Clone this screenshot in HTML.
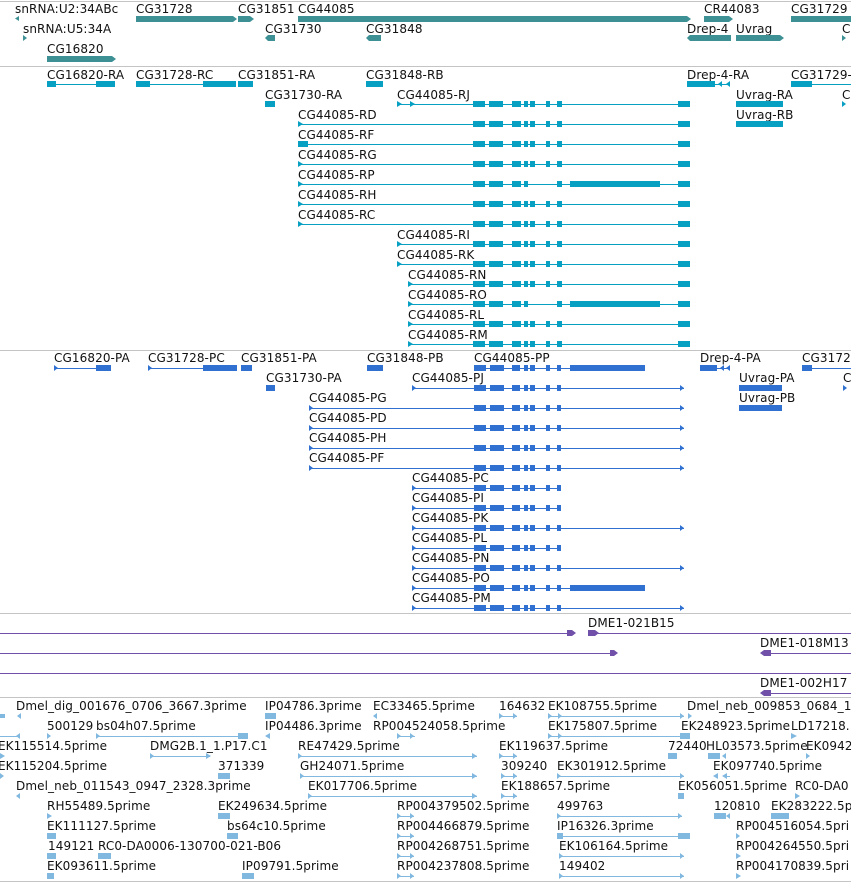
<!DOCTYPE html>
<html><head><meta charset="utf-8"><style>
html,body{margin:0;padding:0;background:#fff;}
svg{display:block;}
rect,line{shape-rendering:crispEdges;}
text{font-family:"DejaVu Sans","Liberation Sans",sans-serif;font-size:12px;fill:#111;letter-spacing:0.1px;}
</style></head><body>
<svg width="851" height="882" viewBox="0 0 851 882" xmlns="http://www.w3.org/2000/svg">
<defs>
<g id="e1"><rect x="473" y="-3" width="12" height="6"/><rect x="489" y="-3" width="14" height="6"/><rect x="512" y="-3" width="9" height="6"/><rect x="524" y="-3" width="4" height="6"/><rect x="530" y="-3" width="5" height="6"/><rect x="546" y="-3" width="4" height="6"/><rect x="557" y="-3" width="5" height="6"/><rect x="678" y="-3" width="12" height="6"/></g>
<g id="e2"><rect x="473" y="-3" width="12" height="6"/><rect x="489" y="-3" width="14" height="6"/><rect x="512" y="-3" width="9" height="6"/><rect x="524" y="-3" width="4" height="6"/><rect x="557" y="-3" width="5" height="6"/><rect x="570" y="-3" width="90" height="6"/><rect x="678" y="-3" width="12" height="6"/></g>
<g id="p0"><rect x="474" y="-3" width="12" height="6"/><rect x="490" y="-3" width="14" height="6"/><rect x="512" y="-3" width="8" height="6"/><rect x="524" y="-3" width="4" height="6"/><rect x="530" y="-3" width="5" height="6"/><rect x="546" y="-3" width="4" height="6"/><rect x="557" y="-3" width="4" height="6"/></g>
</defs>
<g stroke="#c4c4c4" stroke-width="1"><line x1="0" y1="1.5" x2="851" y2="1.5"/><line x1="0" y1="66.5" x2="851" y2="66.5"/><line x1="0" y1="350.5" x2="851" y2="350.5"/><line x1="0" y1="613.5" x2="851" y2="613.5"/><line x1="0" y1="697.5" x2="851" y2="697.5"/><line x1="0" y1="881.5" x2="851" y2="881.5"/></g>

<!-- genes -->
<text x="15" y="13">snRNA:U2:34ABc</text><text x="136" y="13">CG31728</text><text x="238" y="13">CG31851</text><text x="298" y="13">CG44085</text><text x="704" y="13">CR44083</text><text x="791" y="13">CG31729</text>
<text x="23" y="33">snRNA:U5:34A</text><text x="265" y="33">CG31730</text><text x="366" y="33">CG31848</text><text x="687" y="33">Drep-4</text><text x="736" y="33">Uvrag</text><text x="842" y="33">C</text>
<text x="47" y="53">CG16820</text>
<g fill="#3d9094">
<polygon points="15,18.5 19,16 19,21"/><rect x="136" y="16" width="97" height="6"/><polygon points="233,16 237,19 233,22"/><rect x="238" y="16" width="12" height="6"/><polygon points="250,16 254,19 250,22"/><rect x="298" y="16" width="389" height="6"/><polygon points="687,16 691,19 687,22"/><rect x="704" y="16" width="25" height="6"/><polygon points="729,16 733,19 729,22"/><rect x="791" y="16" width="60" height="6"/>
<polygon points="23,35 27,38 23,41"/><polygon points="265,38 268,35 268,41"/><rect x="268" y="35" width="7" height="6"/><polygon points="366,38 369,35 369,41"/><rect x="369" y="35" width="12" height="6"/><polygon points="687,38 690,35 690,41"/><rect x="690" y="35" width="41" height="6"/><rect x="736" y="35" width="44" height="6"/><polygon points="780,35 784,38 780,41"/><polygon points="842,35 846,38 842,41"/>
<rect x="47" y="56" width="65" height="6"/><polygon points="112,56 116,59 112,62"/>
</g>

<!-- transcripts -->
<text x="47" y="79">CG16820-RA</text><text x="136" y="79">CG31728-RC</text><text x="238" y="79">CG31851-RA</text><text x="366" y="79">CG31848-RB</text><text x="687" y="79">Drep-4-RA</text><text x="791" y="79">CG31729-</text>
<text x="265" y="99">CG31730-RA</text><text x="397" y="99">CG44085-RJ</text><text x="736" y="99">Uvrag-RA</text><text x="842" y="99">C</text>
<text x="298" y="119">CG44085-RD</text><text x="736" y="119">Uvrag-RB</text>
<text x="298" y="139">CG44085-RF</text><text x="298" y="159">CG44085-RG</text><text x="298" y="179">CG44085-RP</text><text x="298" y="199">CG44085-RH</text><text x="298" y="219">CG44085-RC</text>
<text x="397" y="239">CG44085-RI</text><text x="397" y="259">CG44085-RK</text><text x="408" y="279">CG44085-RN</text><text x="408" y="299">CG44085-RO</text><text x="408" y="319">CG44085-RL</text><text x="408" y="339">CG44085-RM</text>
<g fill="#08a0c2">
<rect x="47" y="84" width="68" height="1"/><rect x="47" y="81" width="9" height="6"/><rect x="96" y="81" width="19" height="6"/>
<rect x="136" y="84" width="100" height="1"/><rect x="136" y="81" width="14" height="6"/><rect x="203" y="81" width="33" height="6"/>
<rect x="238" y="81" width="15" height="6"/><rect x="366" y="81" width="17" height="6"/>
<rect x="687" y="81" width="28" height="6"/><rect x="715" y="84" width="15" height="1"/><polygon points="718,84 722,81 722,87"/><polygon points="726,84 730,81 730,87"/>
<rect x="791" y="81" width="21" height="6"/><rect x="812" y="84" width="39" height="1"/>
<rect x="265" y="101" width="10" height="6"/><rect x="736" y="101" width="47" height="6"/><rect x="736" y="121" width="47" height="6"/><polygon points="842,101 846,104 842,107"/>
<rect x="397" y="104" width="293" height="1"/><polygon points="397,101 402,104 397,107"/><polygon points="410,101 415,104 410,107"/>
<use href="#e1" y="104"/>
<rect x="298" y="124" width="392" height="1"/><polygon points="298,121 303,124 298,127"/><use href="#e1" y="124"/>
<rect x="298" y="144" width="392" height="1"/><rect x="298" y="141" width="10" height="6"/><use href="#e1" y="144"/>
<rect x="298" y="164" width="392" height="1"/><polygon points="298,161 303,164 298,167"/><use href="#e1" y="164"/>
<rect x="298" y="184" width="392" height="1"/><polygon points="298,181 303,184 298,187"/><use href="#e2" y="184"/>
<rect x="298" y="204" width="392" height="1"/><polygon points="298,201 303,204 298,207"/><use href="#e1" y="204"/>
<rect x="298" y="224" width="392" height="1"/><polygon points="298,221 303,224 298,227"/><use href="#e1" y="224"/>
<rect x="397" y="244" width="293" height="1"/><polygon points="397,241 402,244 397,247"/><use href="#e1" y="244"/>
<rect x="397" y="264" width="293" height="1"/><polygon points="397,261 402,264 397,267"/><use href="#e1" y="264"/>
<rect x="408" y="284" width="282" height="1"/><polygon points="408,281 413,284 408,287"/><use href="#e1" y="284"/>
<rect x="408" y="304" width="282" height="1"/><polygon points="408,301 413,304 408,307"/><use href="#e2" y="304"/>
<rect x="408" y="324" width="282" height="1"/><polygon points="408,321 413,324 408,327"/><use href="#e1" y="324"/>
<rect x="408" y="344" width="282" height="1"/><polygon points="408,341 413,344 408,347"/><use href="#e1" y="344"/>
</g>

<!-- peptides -->
<text x="54" y="362">CG16820-PA</text><text x="148" y="362">CG31728-PC</text><text x="241" y="362">CG31851-PA</text><text x="367" y="362">CG31848-PB</text><text x="474" y="362">CG44085-PP</text><text x="700" y="362">Drep-4-PA</text><text x="802" y="362">CG3172</text>
<text x="266" y="382">CG31730-PA</text><text x="412" y="382">CG44085-PJ</text><text x="739" y="382">Uvrag-PA</text><text x="843" y="382">C</text>
<text x="309" y="402">CG44085-PG</text><text x="739" y="402">Uvrag-PB</text>
<text x="309" y="422">CG44085-PD</text><text x="309" y="442">CG44085-PH</text><text x="309" y="462">CG44085-PF</text>
<text x="412" y="482">CG44085-PC</text><text x="412" y="502">CG44085-PI</text><text x="412" y="522">CG44085-PK</text><text x="412" y="542">CG44085-PL</text><text x="412" y="562">CG44085-PN</text><text x="412" y="582">CG44085-PO</text><text x="412" y="602">CG44085-PM</text>
<g fill="#3070d0">
<rect x="54" y="368" width="57" height="1"/><polygon points="54,365 58,368 54,371"/><rect x="96" y="365" width="15" height="6"/>
<rect x="148" y="368" width="89" height="1"/><polygon points="148,365 152,368 148,371"/><rect x="203" y="365" width="34" height="6"/>
<rect x="241" y="365" width="11" height="6"/><rect x="367" y="365" width="16" height="6"/>
<rect x="474" y="368" width="171" height="1"/><use href="#p0" y="368"/><rect x="570" y="365" width="75" height="6"/>
<rect x="700" y="365" width="17" height="6"/><rect x="717" y="368" width="13" height="1"/><polygon points="720,368 724,365 724,371"/><polygon points="726,368 730,365 730,371"/>
<rect x="802" y="365" width="10" height="6"/><rect x="812" y="368" width="39" height="1"/>
<rect x="266" y="385" width="9" height="6"/><rect x="739" y="385" width="43" height="6"/><rect x="739" y="405" width="43" height="6"/><polygon points="843,385 847,388 843,391"/>
<rect x="412" y="388" width="272" height="1"/><polygon points="412,385 416,388 412,391"/><use href="#p0" y="388"/><polygon points="680,385 684,388 680,391"/>
<rect x="309" y="408" width="375" height="1"/><polygon points="309,405 313,408 309,411"/><use href="#p0" y="408"/><polygon points="680,405 684,408 680,411"/>
<rect x="309" y="428" width="375" height="1"/><polygon points="309,425 313,428 309,431"/><use href="#p0" y="428"/><polygon points="680,425 684,428 680,431"/>
<rect x="309" y="448" width="375" height="1"/><polygon points="309,445 313,448 309,451"/><use href="#p0" y="448"/><polygon points="680,445 684,448 680,451"/>
<rect x="309" y="468" width="375" height="1"/><polygon points="309,465 313,468 309,471"/><use href="#p0" y="468"/><polygon points="680,465 684,468 680,471"/>
<rect x="412" y="488" width="149" height="1"/><polygon points="412,485 416,488 412,491"/><use href="#p0" y="488"/>
<rect x="412" y="508" width="149" height="1"/><polygon points="412,505 416,508 412,511"/><use href="#p0" y="508"/>
<rect x="412" y="528" width="272" height="1"/><polygon points="412,525 416,528 412,531"/><use href="#p0" y="528"/><polygon points="680,525 684,528 680,531"/>
<rect x="412" y="548" width="149" height="1"/><polygon points="412,545 416,548 412,551"/><use href="#p0" y="548"/>
<rect x="412" y="568" width="272" height="1"/><polygon points="412,565 416,568 412,571"/><use href="#p0" y="568"/><polygon points="680,565 684,568 680,571"/>
<rect x="412" y="588" width="233" height="1"/><polygon points="412,585 416,588 412,591"/><use href="#p0" y="588"/><rect x="570" y="585" width="75" height="6"/>
<rect x="412" y="608" width="272" height="1"/><polygon points="412,605 416,608 412,611"/><use href="#p0" y="608"/><polygon points="680,605 684,608 680,611"/>
</g>

<!-- clones -->
<text x="588" y="627">DME1-021B15</text><text x="760" y="647">DME1-018M13</text><text x="760" y="687">DME1-002H17</text>
<g fill="#7050a8">
<rect x="0" y="633" width="570" height="1"/><rect x="567" y="630" width="5" height="6"/><polygon points="572,630 576,633 572,636"/>
<rect x="588" y="630" width="7" height="6"/><polygon points="595,630 599,633 595,636"/><rect x="598" y="633" width="253" height="1"/>
<rect x="0" y="653" width="614" height="1"/><rect x="610" y="650" width="4" height="6"/><polygon points="614,650 618,653 614,656"/>
<polygon points="760,653 764,650 764,656"/><rect x="764" y="650" width="7" height="6"/><rect x="771" y="653" width="80" height="1"/>
<rect x="0" y="673" width="851" height="1"/>
<polygon points="760,693 764,690 764,696"/><rect x="764" y="690" width="7" height="6"/><rect x="771" y="693" width="80" height="1"/>
</g>

<!-- ESTs -->
<g>
<text x="16" y="710">Dmel_dig_001676_0706_3667.3prime</text><text x="265" y="710">IP04786.3prime</text><text x="373" y="710">EC33465.5prime</text><text x="499" y="710">164632</text><text x="548" y="710">EK108755.5prime</text><text x="687" y="710">Dmel_neb_009853_0684_1</text>
<text x="47" y="730">500129</text><text x="96" y="730">bs04h07.5prime</text><text x="265" y="730">IP04486.3prime</text><text x="373" y="730">RP004524058.5prime</text><text x="548" y="730">EK175807.5prime</text><text x="681" y="730">EK248923.5prime</text><text x="791" y="730">LD17218.</text>
<text x="-2" y="750">EK115514.5prime</text><text x="150" y="750">DMG2B.1_1.P17.C1</text><text x="298" y="750">RE47429.5prime</text><text x="499" y="750">EK119637.5prime</text><text x="668" y="750">72440</text><text x="706" y="750">HL03573.5prime</text><text x="806" y="750">EK0942</text>
<text x="-2" y="770">EK115204.5prime</text><text x="218" y="770">371339</text><text x="300" y="770">GH24071.5prime</text><text x="501" y="770">309240</text><text x="557" y="770">EK301912.5prime</text><text x="713" y="770">EK097740.5prime</text>
<text x="16" y="790">Dmel_neb_011543_0947_2328.3prime</text><text x="308" y="790">EK017706.5prime</text><text x="501" y="790">EK188657.5prime</text><text x="678" y="790">EK056051.5prime</text><text x="795" y="790">RC0-DA0</text>
<text x="47" y="810">RH55489.5prime</text><text x="218" y="810">EK249634.5prime</text><text x="397" y="810">RP004379502.5prime</text><text x="557" y="810">499763</text><text x="714" y="810">120810</text><text x="771" y="810">EK283222.5p</text>
<text x="47" y="830">EK111127.5prime</text><text x="227" y="830">bs64c10.5prime</text><text x="397" y="830">RP004466879.5prime</text><text x="557" y="830">IP16326.3prime</text><text x="736" y="830">RP004516054.5pri</text>
<text x="48" y="850">149121</text><text x="98" y="850">RC0-DA0006-130700-021-B06</text><text x="397" y="850">RP004268751.5prime</text><text x="559" y="850">EK106164.5prime</text><text x="736" y="850">RP004264550.5pri</text>
<text x="47" y="870">EK093611.5prime</text><text x="242" y="870">IP09791.5prime</text><text x="397" y="870">RP004237808.5prime</text><text x="559" y="870">149402</text><text x="736" y="870">RP004170839.5pri</text>
</g>
<g fill="#80b8e0">
<rect x="0" y="714" width="5" height="4"/><polygon points="17,716 21,713 21,719"/><rect x="265" y="713" width="11" height="6"/><polygon points="373,716 377,713 377,719"/><rect x="499" y="716" width="18" height="1"/><polygon points="499,713 503,716 499,719"/><polygon points="513,713 517,716 513,719"/><rect x="548" y="716" width="136" height="1"/><polygon points="548,713 552,716 548,719"/><polygon points="558,713 562,716 558,719"/><polygon points="680,713 684,716 680,719"/><polygon points="688,713 692,716 688,719"/>
<rect x="0" y="736" width="20" height="1"/><polygon points="16,736 20,733 20,739"/><polygon points="47,733 51,736 47,739"/><rect x="96" y="736" width="152" height="1"/><polygon points="96,733 100,736 96,739"/><rect x="238" y="733" width="10" height="6"/><polygon points="265,736 270,733 270,739"/><rect x="397" y="736" width="18" height="1"/><polygon points="397,733 401,736 397,739"/><polygon points="410,733 414,736 410,739"/><rect x="548" y="736" width="136" height="1"/><polygon points="548,733 552,736 548,739"/><polygon points="558,733 562,736 558,739"/><rect x="680" y="733" width="10" height="6"/><polygon points="791,733 797,736 791,739"/>
<polygon points="0,753 5,756 0,759"/><rect x="150" y="756" width="60" height="1"/><polygon points="150,753 154,756 150,759"/><polygon points="206,753 211,756 206,759"/><rect x="298" y="756" width="179" height="1"/><polygon points="298,753 302,756 298,759"/><polygon points="472,753 477,756 472,759"/><rect x="499" y="756" width="18" height="1"/><polygon points="499,753 503,756 499,759"/><polygon points="513,753 517,756 513,759"/><rect x="668" y="753" width="9" height="6"/><rect x="708" y="753" width="12" height="6"/><polygon points="722,756 726,753 726,759"/><polygon points="806,753 810,756 806,759"/>
<polygon points="0,773 4,776 0,779"/><rect x="218" y="773" width="12" height="6"/><rect x="300" y="776" width="177" height="1"/><polygon points="300,773 304,776 300,779"/><polygon points="472,773 477,776 472,779"/><rect x="501" y="776" width="16" height="1"/><polygon points="501,773 505,776 501,779"/><polygon points="513,773 517,776 513,779"/><rect x="557" y="776" width="127" height="1"/><polygon points="557,773 561,776 557,779"/><polygon points="680,773 684,776 680,779"/><polygon points="713,776 718,773 718,779"/><polygon points="722,776 727,773 727,779"/><rect x="727" y="776" width="3" height="1"/>
<polygon points="16,796 20,793 20,799"/><rect x="308" y="796" width="169" height="1"/><polygon points="308,793 312,796 308,799"/><polygon points="472,793 477,796 472,799"/><rect x="501" y="796" width="16" height="1"/><polygon points="501,793 505,796 501,799"/><polygon points="513,793 517,796 513,799"/><rect x="678" y="793" width="6" height="6"/><polygon points="795,793 800,796 795,799"/>
<polygon points="47,813 52,816 47,819"/><rect x="218" y="813" width="12" height="6"/><rect x="397" y="816" width="17" height="1"/><polygon points="397,813 401,816 397,819"/><polygon points="410,813 414,816 410,819"/><rect x="557" y="816" width="125" height="1"/><polygon points="557,813 561,816 557,819"/><polygon points="678,813 682,816 678,819"/><rect x="714" y="813" width="12" height="6"/><polygon points="726,816 730,813 730,819"/><rect x="771" y="813" width="18" height="6"/>
<rect x="47" y="833" width="9" height="6"/><rect x="227" y="833" width="11" height="6"/><rect x="397" y="836" width="17" height="1"/><polygon points="397,833 401,836 397,839"/><polygon points="410,833 414,836 410,839"/><rect x="557" y="836" width="133" height="1"/><rect x="557" y="833" width="6" height="6"/><rect x="678" y="833" width="12" height="6"/><polygon points="736,833 740,836 736,839"/>
<rect x="47" y="853" width="9" height="6"/><rect x="98" y="853" width="13" height="6"/><rect x="397" y="856" width="17" height="1"/><polygon points="397,853 401,856 397,859"/><polygon points="410,853 414,856 410,859"/><rect x="559" y="856" width="125" height="1"/><polygon points="559,853 563,856 559,859"/><polygon points="680,853 684,856 680,859"/><polygon points="736,853 741,856 736,859"/>
<rect x="47" y="873" width="7" height="6"/><rect x="242" y="873" width="12" height="6"/><rect x="397" y="876" width="17" height="1"/><polygon points="397,873 401,876 397,879"/><polygon points="410,873 414,876 410,879"/><rect x="559" y="876" width="125" height="1"/><polygon points="559,873 563,876 559,879"/><polygon points="680,873 684,876 680,879"/><polygon points="736,873 741,876 736,879"/>
</g>
</svg>
</body></html>
